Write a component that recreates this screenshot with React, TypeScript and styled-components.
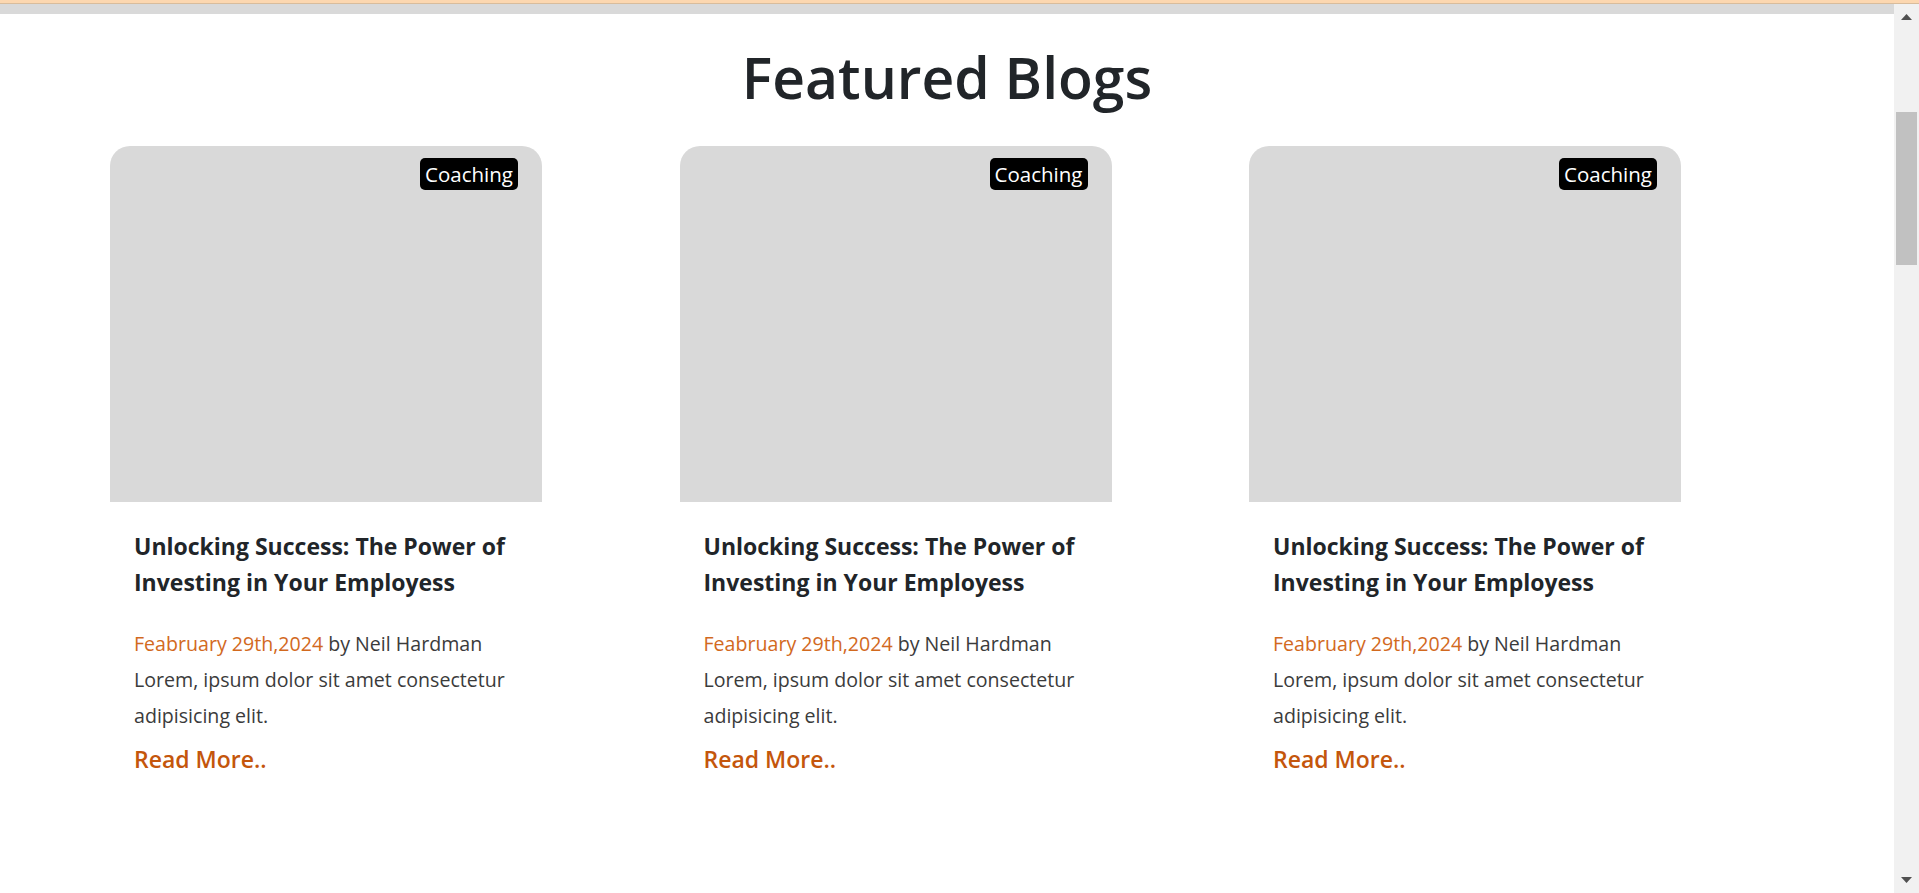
import React from "react";
import styled, { createGlobalStyle } from "styled-components";

const C = {
  ink: "#212529",
  body: "#3b3b3b",
  orange: "#d2691e",
  orangeDark: "#c4560c",
  image: "#d9d9d9",
  strip: "#d9d9d9",
  track: "#f1f1f1",
  thumb: "#c1c1c1",
};

const FONT = `"Open Sans", "Noto Sans", Arial, sans-serif`;

const blogs = [
  { id: 1, tag: "Coaching" },
  { id: 2, tag: "Coaching" },
  { id: 3, tag: "Coaching" },
];

const GlobalStyle = createGlobalStyle`
  html, body {
    margin: 0;
    padding: 0;
    height: 100%;
    overflow: hidden;
    background: #ffffff;
  }
  * {
    box-sizing: border-box;
  }
  #root {
    height: 100%;
  }
`;

const App = () => {
  return (
    <>
      <GlobalStyle />
      <Page>
        <TopBand />
        <Viewport>
          <Main>
            <GrayStrip />
            <Section>
              <Title>Featured Blogs</Title>
              <CardRow>
                {blogs.map((blog) => (
                  <Column key={blog.id}>
                    <Card>
                      <Thumb>
                        <Tag>{blog.tag}</Tag>
                      </Thumb>
                      <CardBody>
                        <CardTitle>
                          Unlocking Success: The Power of Investing in Your
                          Employess
                        </CardTitle>
                        <Text>
                          <DateText>Feabruary 29th,2024</DateText> by Neil
                          Hardman
                          <br />
                          Lorem, ipsum dolor sit amet consectetur adipisicing
                          elit.
                        </Text>
                        <ReadMore href="#">Read More..</ReadMore>
                      </CardBody>
                    </Card>
                  </Column>
                ))}
              </CardRow>
            </Section>
          </Main>
          <ScrollBar>
            <ArrowBtn>
              <svg width="11" height="6" viewBox="0 0 11 6">
                <path d="M5.5 0 L11 6 L0 6 Z" fill="#505050" />
              </svg>
            </ArrowBtn>
            <ScrollThumb />
            <Spacer />
            <ArrowBtn>
              <svg width="11" height="6" viewBox="0 0 11 6">
                <path d="M0 0 L11 0 L5.5 6 Z" fill="#505050" />
              </svg>
            </ArrowBtn>
          </ScrollBar>
        </Viewport>
      </Page>
    </>
  );
};

export default App;

const Page = styled.div`
  width: 100%;
  height: 100vh;

  display: flex;
  flex-direction: column;
`;

const TopBand = styled.div`
  height: 4px;
  flex-shrink: 0;

  background: #fcd7b0;
  border-bottom: 1px solid #d8bc9c;
`;

const Viewport = styled.div`
  flex: 1;
  min-height: 0;

  display: flex;
`;

const Main = styled.div`
  flex: 1;

  display: flex;
  flex-direction: column;
`;

const GrayStrip = styled.div`
  height: 10px;
  background: ${C.strip};
`;

const Section = styled.section`
  display: flex;
  flex-direction: column;
  align-items: center;

  padding-top: 29px;
`;

const Title = styled.h1`
  margin: 0;

  font-family: ${FONT};
  font-size: 57px;
  font-weight: 600;
  line-height: 1.2;
  color: ${C.ink};
`;

const CardRow = styled.div`
  width: 100%;

  display: grid;
  grid-template-columns: repeat(3, 569.5px);

  padding-left: 110px;
  margin-top: 35px;
`;

const Column = styled.div`
  display: flex;
`;

const Card = styled.article`
  width: 432px;

  display: flex;
  flex-direction: column;
`;

const Thumb = styled.div`
  height: 356px;

  display: flex;
  justify-content: flex-end;
  align-items: flex-start;

  padding: 12px 24px;
  border-radius: 20px 20px 0 0;
  background: ${C.image};
`;

const Tag = styled.span`
  height: 32px;

  display: flex;
  align-items: center;

  padding: 0 5px;
  border-radius: 5px;
  background: #000000;

  font-family: ${FONT};
  font-size: 20.5px;
  color: #ffffff;
`;

const CardBody = styled.div`
  display: flex;
  flex-direction: column;

  padding: 26px 24px 0;
`;

const CardTitle = styled.h3`
  margin: 0 0 26px;

  font-family: ${FONT};
  font-size: 23px;
  font-weight: 700;
  line-height: 36px;
  color: ${C.ink};
`;

const Text = styled.p`
  margin: 0;

  font-family: ${FONT};
  font-size: 19.6px;
  line-height: 36px;
  color: ${C.body};
`;

const DateText = styled.span`
  color: ${C.orange};
`;

const ReadMore = styled.a`
  margin-top: 7px;

  font-family: ${FONT};
  font-size: 23px;
  font-weight: 600;
  line-height: 36px;
  color: ${C.orangeDark};
  text-decoration: none;
`;

const ScrollBar = styled.div`
  width: 25px;
  flex-shrink: 0;

  display: flex;
  flex-direction: column;
  align-items: center;

  background: ${C.track};
`;

const ArrowBtn = styled.div`
  width: 100%;
  height: 26px;

  display: flex;
  align-items: center;
  justify-content: center;
`;

const ScrollThumb = styled.div`
  width: 21px;
  height: 153px;

  margin-top: 82px;
  background: ${C.thumb};
`;

const Spacer = styled.div`
  flex: 1;
`;
